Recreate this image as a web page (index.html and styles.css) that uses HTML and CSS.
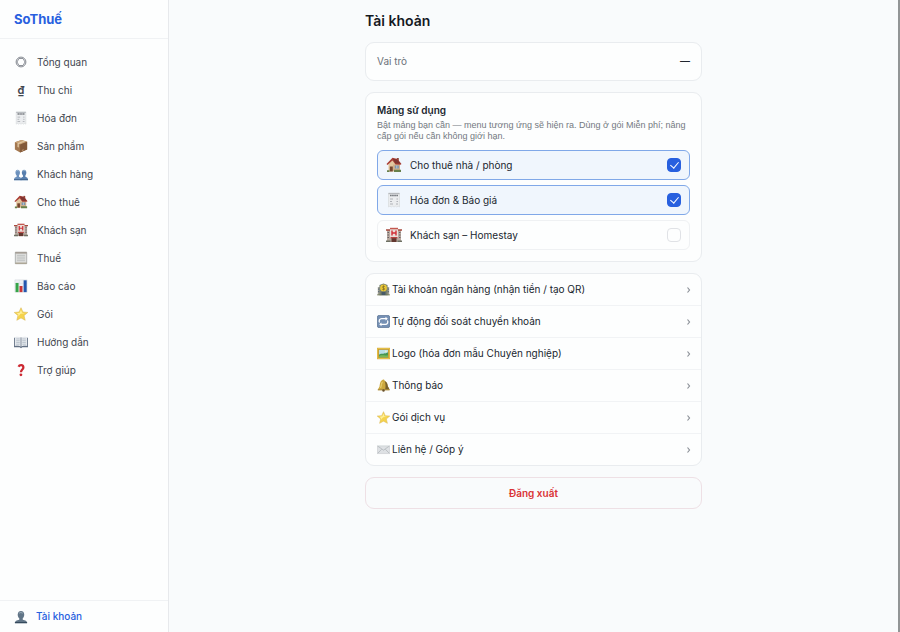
FILE: index.html
```html
<!DOCTYPE html>
<html lang="vi">
<head>
  <meta charset="UTF-8">
  <title>SoThuế</title>
  <meta name="viewport" content="width=device-width, initial-scale=1.0">
  <link rel="stylesheet" href="styles.css">
</head>
<body>
  <svg class="sprite" aria-hidden="true">
    <symbol id="i-circle" viewBox="0 0 16 16">
      <circle cx="8" cy="8" r="5.6" fill="none" stroke="#727780" stroke-width="1"/>
      <path d="M5.7 4h4.6l2.3 4-2.3 4H5.7L3.4 8z" fill="none" stroke="#81868e" stroke-width="1"/>
    </symbol>
    <symbol id="i-receipt" viewBox="0 0 16 16">
      <path d="M2.5 1h11v14l-1.4-.8-1.3.8-1.4-.8-1.4.8-1.4-.8-1.3.8-1.4-.8-1.4.8z" fill="#ebedef" stroke="#d3d6d9" stroke-width=".6"/>
      <path d="M2.5 1h11v1.2h-11z" fill="#b7babe"/>
      <path d="M4 3.5h8" stroke="#777b80" stroke-width="1.7" stroke-dasharray="1.7 .4"/>
      <path d="M4 7h3M4 9.5h2M4 12h3M10.5 7H12M10.5 9.5H12M10 12h2" stroke="#a9adb2" stroke-width=".9"/>
    </symbol>
    <symbol id="i-box" viewBox="0 0 16 16">
      <path d="M1 3.7 8.6 1 15 3v9l-8 3.5L1 12z" fill="#a37850"/>
      <path d="M1 3.7 8.6 1 15 3 7 6.3z" fill="#c9a377"/>
      <path d="M7 6.3 15 3v9l-8 3.5z" fill="#82593a"/>
      <path d="m4 4.9 7.4-3 1.6.5-7.5 3.3v4L4 9z" fill="#e2c9a4"/>
      <path d="m9 12.5 2-.9v1.3l-2 .9z" fill="#c6a27b"/>
    </symbol>
    <symbol id="i-people" viewBox="0 0 16 16">
      <path d="M0 15c0-2.7 1-3.3 3-3.9V9.6C1.2 8 1 3 4.2 3s3.2 5 1.5 6.6v1.5c1.9.6 2.8 1.2 2.8 3.9z" fill="#6c91bd"/>
      <path d="M7.5 15c0-2.7 1-3.3 2.8-3.9V9.6C8.5 8 8.3 3 11.5 3s3.2 5 1.5 6.6v1.5c2 .6 3 1.2 3 3.9z" fill="#587fae"/>
      <path d="M2.8 5c.7-1.3 2-1.2 2.7-.3M10.2 5c.7-1.3 2-1.2 2.7-.3" stroke="#a7c2dd" stroke-width="1" fill="none"/>
      <path d="M0 14h16v1H0z" fill="#3e6088"/>
    </symbol>
    <symbol id="i-person" viewBox="0 0 16 16">
      <path d="M1 15c0-2.6 2-3.3 5-4V9.5C3.2 7 3.7 1 8 1s4.8 6 2 8.5V11c3 .7 5 1.4 5 4z" fill="#617587"/>
      <path d="M6 4c.7-1.6 3-1.5 3.8 0" stroke="#92a4b1" stroke-width="1.2" fill="none"/>
      <path d="M1 13.8h14V15H1z" fill="#34485b"/>
    </symbol>
    <symbol id="i-house" viewBox="0 0 16 16">
      <path d="M10.8 1h2v4h-2z" fill="#8b4a3c"/>
      <path d="M2.5 7 7.5 2l6 5v7.5h-11z" fill="#e3c7a0"/>
      <path d="M7 7.5h7V14H7z" fill="#d2b18c"/>
      <path d="M.5 7 6.5.8l5 1.2 4 5-1 .8-5-.2-3-4L1.5 8z" fill="#aa3f35"/>
      <path d="m6.8 1.7 2.6 4.8h5.2L11 2.5z" fill="#7e3531"/>
      <path d="M3.8 9.5h3v5h-3z" fill="#75462f"/>
      <path d="M8.8 8.5h4v3h-4z" fill="#7895b3"/>
      <path d="M10.8 8.5v3" stroke="#f1e8da" stroke-width=".6"/>
      <path d="M1 13.2h2.5V15H1zM8 12.8h7V15H8z" fill="#68804a"/>
    </symbol>
    <symbol id="i-hotel" viewBox="0 0 16 16">
      <path d="M1 3h14v12H1z" fill="#b8aaa0"/>
      <path d="M0 2.2h5v1.6H0zM11 2.2h5v1.6h-5z" fill="#a7483e"/>
      <path d="M4 1h8v10H4z" fill="#eadfd8"/>
      <path d="M4 .8h8v1.5H4z" fill="#c45950"/>
      <path d="M6 3.5v5M10 3.5v5M6 6h4" stroke="#d22e35" stroke-width="1.4"/>
      <path d="M1.5 5.5H3M1.5 8H3M1.5 10.5H3M13 5.5h1.5M13 8h1.5M13 10.5h1.5" stroke="#665f64" stroke-width="1.2"/>
      <path d="M5.5 11h5v4h-5z" fill="#62372f"/>
      <path d="M4.5 10h7v1.3h-7z" fill="#b84340"/>
      <path d="M0 13.5h4.5V15H0zM11.5 13.5H16V15h-4.5z" fill="#6e7164"/>
    </symbol>
    <symbol id="i-note" viewBox="0 0 16 16">
      <path d="M1.5 1.5h13v13h-13z" fill="#dedfdd" stroke="#989b9b" stroke-width=".8"/>
      <path d="M1.5 1h13v2h-13z" fill="#a49e96"/>
      <path d="M3.5 5h9M3.5 7h9M3.5 9h9M3.5 11h9" stroke="#b4b7b8" stroke-width=".8"/>
      <path d="M1.5 13.2h13v1.5h-13z" fill="#aaa391"/>
    </symbol>
    <symbol id="i-chart" viewBox="0 0 16 16">
      <path d="M1 1h14v14H1z" fill="#eff2f5" stroke="#cdd2d8" stroke-width=".5"/>
      <path d="M1 5h14M1 9h14M6 1v14M10.5 1v14" stroke="#d4dbe2" stroke-width=".5"/>
      <path d="M1.8 4.5h3.4V15H1.8z" fill="#35a447"/>
      <path d="M6.3 8h3.4v7H6.3z" fill="#c93636"/>
      <path d="M11 1.5h3.5V15H11z" fill="#2457ae"/>
    </symbol>
    <symbol id="i-star" viewBox="0 0 16 16">
      <path d="m8 .8 2.2 4.9 5.6.5-4.3 3.6 1.3 5.4L8 12.5l-4.8 2.7 1.3-5.4L.2 6.2l5.6-.5z" fill="#f5d34c" stroke="#d9b657" stroke-width=".6"/>
      <path d="m8 3 1.2 3.7 3.3.3-5 .8-3 3.2.7-2.2L3 7l3.5-.5z" fill="#fff09a"/>
    </symbol>
    <symbol id="i-book" viewBox="0 0 16 16">
      <path d="M0 3h16v11H9.5L8 15l-1.5-1H0z" fill="#637184"/>
      <path d="M1 2.5c3-.8 5.5-.5 7 .7 1.5-1.2 4-1.5 7-.7v10c-3-.5-5.5-.2-7 .9-1.5-1.1-4-1.4-7-.9z" fill="#e5e9ed"/>
      <path d="M8 3v10.5" stroke="#6e7b8b" stroke-width=".9"/>
      <path d="M2.5 4.5h4M2.5 6.5h4M2.5 8.5h4M2.5 10.5h4M9.5 4.5h4M9.5 6.5h4M9.5 8.5h4M9.5 10.5h4" stroke="#a9b4c0" stroke-width=".8"/>
    </symbol>
    <symbol id="i-question" viewBox="0 0 16 16">
      <path d="M5.2 4.2C6.2 2 10.7 1.7 10.7 5c0 2.5-2.7 2.6-2.7 5.5" fill="none" stroke="#cc2932" stroke-width="2.6"/>
      <circle cx="7.9" cy="13.5" r="1.6" fill="#cc2932"/>
    </symbol>
    <symbol id="i-bank" viewBox="0 0 16 16">
      <path d="M1 5h14v10H1z" fill="#a2a094"/>
      <path d="M3 2.5 8 .5l5 2V15H3z" fill="#77806f"/>
      <path d="M1.5 7.5h1.2M1.5 10.5h1.2M13.3 7.5h1.2M13.3 10.5h1.2" stroke="#4f6274" stroke-width="1.5"/>
      <circle cx="8" cy="6" r="4.2" fill="#e9c735"/>
      <path d="M9.6 4.5C8.5 3.5 6.5 4 6.7 5.2S9.6 6.3 9.5 7.4 7.2 8.5 6.3 7.6M8 3v6" fill="none" stroke="#776526" stroke-width=".8"/>
      <path d="M5.5 11h5v4h-5z" fill="#485b67"/>
      <path d="M0 14h5.5v1H0zM10.5 14H16v1h-5.5z" fill="#6c7752"/>
    </symbol>
    <symbol id="i-sync" viewBox="0 0 16 16">
      <rect x=".5" y=".5" width="15" height="15" rx="2" fill="#7590b4" stroke="#5c7597"/>
      <path d="M11.5 4.5H5.8a3 3 0 0 0-2.6 4.7M4.5 11.5h5.7a3 3 0 0 0 2.6-4.7" fill="none" stroke="#fff" stroke-width="1.5"/>
      <path d="m10.5 2.3 2.8 2.2-2.8 2.2zM5.5 9.3l-2.8 2.2 2.8 2.2z" fill="#fff"/>
    </symbol>
    <symbol id="i-picture" viewBox="0 0 16 16">
      <path d="M0 1h16v14H0z" fill="#c79a32"/>
      <path d="M.8 1.8h14.4v12.4H.8z" fill="none" stroke="#edcb4c"/>
      <path d="M2.5 3.5h11v9h-11z" fill="#b8dfe6"/>
      <path d="M2.5 9.5c3-3 4.500.5 11-3v6h-11z" fill="#459650"/>
      <path d="M2.5 11c4-1.6 7 0 11-1v2.5h-11z" fill="#79b956"/>
      <circle cx="11" cy="5.2" r="1" fill="#fff8c7"/>
    </symbol>
    <symbol id="i-bell" viewBox="0 0 16 16">
      <path d="M6 1.5C8 0 9.5 1 9.5 2.5c3 1 3.5 4 3.8 6.5l2.2 4H1l2-3.5c.5-3 .5-6 3-8z" fill="#cda93d"/>
      <path d="M9.5 2.5c3 1 3.5 4 3.8 6.5l2.2 4H10c1-4 .5-7.5-.5-10.5z" fill="#78602a"/>
      <path d="M6.5 3.5C5.3 5.5 5.5 8 4.5 11" stroke="#f0d878" stroke-width="1.2" fill="none"/>
      <path d="M1 12.5h14.5V14H1z" fill="#a8862f"/>
      <circle cx="8" cy="14.2" r="1.5" fill="#69512b"/>
    </symbol>
    <symbol id="i-mail" viewBox="0 0 16 16">
      <path d="M.5 3.5h15v9.5H.5z" fill="#dee1e4" stroke="#c4c8cc" stroke-width=".7"/>
      <path d="m.8 3.8 7.2 5 7.2-5M.8 12.7l5-5M15.2 12.7l-5-5" fill="none" stroke="#aeb3b8" stroke-width=".9"/>
    </symbol>
    <symbol id="i-chevron" viewBox="0 0 6 8">
      <path d="m2.5 1.500 2 2.500-2 2.500" fill="none" stroke="#8b9097" stroke-width="1.2"/>
    </symbol>
  </svg>

  <div class="app">
    <aside class="sidebar">
      <div class="brand">SoThuế</div>
      <nav class="nav">
        <a href="#"><svg><use href="#i-circle"/></svg>Tổng quan</a>
        <a href="#"><span class="dong">₫</span>Thu chi</a>
        <a href="#"><svg><use href="#i-receipt"/></svg>Hóa đơn</a>
        <a href="#"><svg><use href="#i-box"/></svg>Sản phẩm</a>
        <a href="#"><svg><use href="#i-people"/></svg>Khách hàng</a>
        <a href="#"><svg><use href="#i-house"/></svg>Cho thuê</a>
        <a href="#"><svg><use href="#i-hotel"/></svg>Khách sạn</a>
        <a href="#"><svg><use href="#i-note"/></svg>Thuế</a>
        <a href="#"><svg><use href="#i-chart"/></svg>Báo cáo</a>
        <a href="#"><svg><use href="#i-star"/></svg>Gói</a>
        <a href="#"><svg><use href="#i-book"/></svg>Hướng dẫn</a>
        <a href="#"><svg><use href="#i-question"/></svg>Trợ giúp</a>
      </nav>
      <a class="account" href="#"><svg><use href="#i-person"/></svg>Tài khoản</a>
    </aside>

    <main class="main">
      <div class="content">
        <h1>Tài khoản</h1>

        <section class="card role">
          <span>Vai trò</span>
          <strong>—</strong>
        </section>

        <section class="card modules">
          <h2>Mảng sử dụng</h2>
          <p>Bật mảng bạn cần — menu tương ứng sẽ hiện ra. Dùng ở gói Miễn phí; nâng cấp gói nếu cần không giới hạn.</p>
          <div class="options">
            <label class="option"><svg><use href="#i-house"/></svg><span>Cho thuê nhà / phòng</span><input type="checkbox" checked></label>
            <label class="option"><svg><use href="#i-receipt"/></svg><span>Hóa đơn &amp; Báo giá</span><input type="checkbox" checked></label>
            <label class="option"><svg><use href="#i-hotel"/></svg><span>Khách sạn – Homestay</span><input type="checkbox"></label>
          </div>
        </section>

        <section class="card links">
          <a href="#"><svg><use href="#i-bank"/></svg><span>Tài khoản ngân hàng (nhận tiền / tạo QR)</span><svg class="chevron"><use href="#i-chevron"/></svg></a>
          <a href="#"><svg><use href="#i-sync"/></svg><span>Tự động đối soát chuyển khoản</span><svg class="chevron"><use href="#i-chevron"/></svg></a>
          <a href="#"><svg><use href="#i-picture"/></svg><span>Logo (hóa đơn mẫu Chuyên nghiệp)</span><svg class="chevron"><use href="#i-chevron"/></svg></a>
          <a href="#"><svg><use href="#i-bell"/></svg><span>Thông báo</span><svg class="chevron"><use href="#i-chevron"/></svg></a>
          <a href="#"><svg><use href="#i-star"/></svg><span>Gói dịch vụ</span><svg class="chevron"><use href="#i-chevron"/></svg></a>
          <a href="#"><svg><use href="#i-mail"/></svg><span>Liên hệ / Góp ý</span><svg class="chevron"><use href="#i-chevron"/></svg></a>
        </section>

        <button class="logout" type="button">Đăng xuất</button>
      </div>
    </main>
  </div>
</body>
</html>
```
FILE: styles.css
```css
* {
  box-sizing: border-box;
}
body {
  margin: 0;
  font-family: Inter, "Liberation Sans", sans-serif;
  font-size: 10px;
  line-height: 15px;
  color: #20262f;
  background: #f9fbfc;
}
h1, h2, p {
  margin: 0;
}
a {
  color: inherit;
  text-decoration: none;
}
svg {
  flex: none;
}
.sprite {
  position: absolute;
  width: 0;
  height: 0;
}
.app {
  display: flex;
  min-height: 100vh;
  border-right: 2px solid #929596;
}

/* sidebar */
.sidebar {
  display: flex;
  flex-direction: column;
  width: 169px;
  background: #fdfefe;
  border-right: 1px solid #e7e9ec;
}
.brand {
  padding: 9px 14px;
  font-size: 13px;
  line-height: 20px;
  font-weight: 700;
  color: #2860df;
  border-bottom: 1px solid #f0f2f4;
}
.nav {
  flex: 1;
  padding: 9px 0;
}
.nav a {
  display: flex;
  align-items: center;
  gap: 9px;
  height: 28px;
  padding: 0 14px;
  color: #3f454e;
}
.nav svg, .account svg, .dong {
  width: 14px;
  height: 14px;
}
.dong {
  font-size: 11px;
  line-height: 14px;
  font-weight: 600;
  text-align: center;
}
.account {
  display: flex;
  align-items: center;
  gap: 8px;
  height: 32px;
  padding: 0 14px;
  font-weight: 500;
  color: #2860df;
  border-top: 1px solid #f0f2f4;
}

/* account page */
.main {
  flex: 1;
  padding: 11px 14px;
}
.content {
  display: flex;
  flex-direction: column;
  gap: 11px;
  max-width: 337px;
  margin: 0 auto;
}
h1 {
  font-size: 14px;
  line-height: 20px;
  font-weight: 600;
  color: #15191f;
}
.card {
  background: #fdfefe;
  border: 1px solid #e9ecef;
  border-radius: 9px;
}
.role {
  display: flex;
  justify-content: space-between;
  padding: 11px;
  color: #6c727a;
}
.role strong {
  font-weight: 600;
  color: #20262f;
}
.modules {
  padding: 10px 11px 11px;
}
h2 {
  font-size: 10px;
  line-height: 15px;
  font-weight: 600;
}
.modules p {
  margin-top: 2px;
  font-family: "Liberation Sans", Inter, sans-serif;
  font-size: 9px;
  line-height: 11px;
  color: #737981;
}
.options {
  display: grid;
  gap: 5px;
  margin-top: 8px;
}
.option {
  display: flex;
  align-items: center;
  gap: 8px;
  height: 30px;
  padding: 0 8px;
  border: 1px solid #eff1f3;
  border-radius: 6px;
}
.option:has(:checked) {
  background: #f0f6fd;
  border-color: #80a8e8;
}
.option svg {
  width: 16px;
  height: 16px;
}
.option span, .links span {
  flex: 1;
}
.option input {
  display: grid;
  place-items: center;
  appearance: none;
  width: 14px;
  height: 14px;
  margin: 0;
  border: 1px solid #e0e2e6;
  border-radius: 4px;
}
.option input:checked {
  background: #2860df;
  border-color: #2860df;
}
.option input:checked::before {
  content: "";
  width: 4px;
  height: 7px;
  margin-bottom: 2px;
  border: solid #fff;
  border-width: 0 1px 1px 0;
  transform: rotate(40deg);
}
.links a {
  display: flex;
  align-items: center;
  gap: 2px;
  padding: 8px 10px 8px 11px;
}
.links a + a {
  border-top: 1px solid #f1f3f5;
}
.links svg {
  width: 13px;
  height: 13px;
}
.links .chevron {
  width: 6px;
  height: 8px;
}
.logout {
  height: 32px;
  padding: 0;
  font: inherit;
  font-weight: 600;
  color: #d93235;
  background: transparent;
  border: 1px solid #eee0e5;
  border-radius: 9px;
  cursor: pointer;
}
```
